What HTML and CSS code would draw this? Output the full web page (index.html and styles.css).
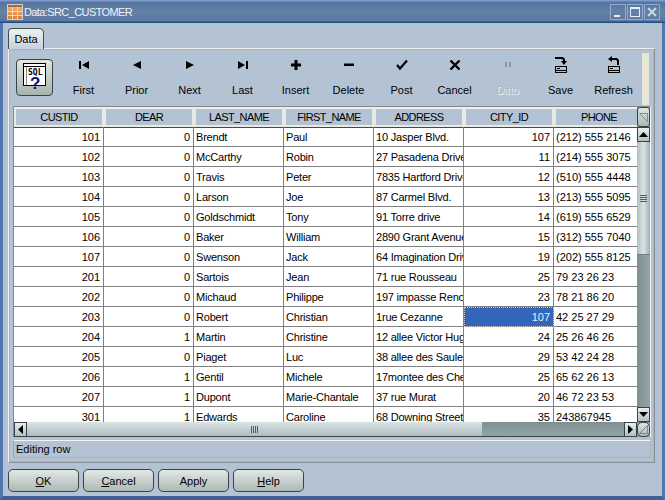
FILE: index.html
```html
<!DOCTYPE html>
<html lang="en">

<head>
    <meta charset="UTF-8">
    <title>Data:SRC_CUSTOMER</title>
    <link rel="stylesheet" href="styles.css">
</head>

<body>
    <div class="window">
        <div class="titlebar">
            <svg class="title-icon" width="16" height="16" viewBox="0 0 16 16">
                <defs>
                    <linearGradient id="tileFill" x1="0" y1="0" x2="0" y2="1">
                        <stop offset="0" stop-color="#f4b878"/>
                        <stop offset="1" stop-color="#e07a2c"/>
                    </linearGradient>
                </defs>
                <rect x="0.5" y="0.5" width="15" height="15" fill="url(#tileFill)" stroke="#c9d2dc"/>
                <rect x="1" y="1" width="14" height="2" fill="#a8683c"/>
                <path d="M1 7.5h14M1 11.5h14M5.500 3v12M10.500 3v12" stroke="#f8d8b0" fill="none"/>
            </svg>
            <span class="title-text">Data:SRC_CUSTOMER</span>
            <div class="win-btns">
                <div class="win-btn"><svg width="16" height="16" viewBox="0 0 16 16"><rect x="4" y="11" width="6" height="2" fill="#e8eef6"/></svg></div>
                <div class="win-btn"><svg width="16" height="16" viewBox="0 0 16 16"><rect x="3.5" y="3.5" width="9" height="9" fill="none" stroke="#e8eef6"/><rect x="3" y="3" width="10" height="2" fill="#e8eef6"/></svg></div>
                <div class="win-btn"><svg width="16" height="16" viewBox="0 0 16 16"><path d="M4 4l8 8M12 4l-8 8" stroke="#c9d6e8" stroke-width="2" fill="none"/></svg></div>
            </div>
        </div>

        <div class="client">
            <div class="tab">Data</div>
            <div class="tab-panel">
                <div class="toolbar">
                    <div class="sql-btn">
                        <svg width="23" height="30" viewBox="0 0 23 30">
                            <rect x="0.5" y="0.5" width="22" height="22" fill="#fff" stroke="#000"/>
                            <path d="M1 3.5h21" stroke="#000"/>
                            <path d="M3.500 4v18" stroke="#888"/>
                            <text x="5" y="11.500" class="sql-text">SQL</text>
                            <text x="7" y="26" class="sql-q">?</text>
                        </svg>
                    </div>
                    <div class="tools">
                        <div class="tool">
                            <svg width="16" height="20" viewBox="0 0 16 20"><path d="M3 6h2v8H3zM13 6v8L6 10z"/></svg>
                            <span>First</span>
                        </div>
                        <div class="tool">
                            <svg width="16" height="20" viewBox="0 0 16 20"><path d="M12 6v8L4 10z"/></svg>
                            <span>Prior</span>
                        </div>
                        <div class="tool">
                            <svg width="16" height="20" viewBox="0 0 16 20"><path d="M4 6v8l8-4z"/></svg>
                            <span>Next</span>
                        </div>
                        <div class="tool">
                            <svg width="16" height="20" viewBox="0 0 16 20"><path d="M3 6v8l7-4zM11 6h2v8h-2z"/></svg>
                            <span>Last</span>
                        </div>
                        <div class="tool">
                            <svg width="16" height="20" viewBox="0 0 16 20"><path d="M6.500 5h3v3.500H13v3H9.500V15h-3v-3.500H3v-3h3.500z"/></svg>
                            <span>Insert</span>
                        </div>
                        <div class="tool">
                            <svg width="16" height="20" viewBox="0 0 16 20"><path d="M3 8.500h10V11H3z"/></svg>
                            <span>Delete</span>
                        </div>
                        <div class="tool">
                            <svg width="16" height="20" viewBox="0 0 16 20"><path d="M3 10l3 3.500L13 5.500" fill="none" stroke="#000" stroke-width="2.200"/></svg>
                            <span>Post</span>
                        </div>
                        <div class="tool">
                            <svg width="16" height="20" viewBox="0 0 16 20"><path d="M3.500 5.500l9 9M12.500 5.500l-9 9" fill="none" stroke="#000" stroke-width="2.400"/></svg>
                            <span>Cancel</span>
                        </div>
                        <div class="tool tool-off">
                            <svg width="16" height="20" viewBox="0 0 16 20"><path d="M5 7h2v5H5zM9 7h2v5H9z" fill="#8d99a8"/></svg>
                            <span>Ditto</span>
                        </div>
                        <div class="tool">
                            <svg width="16" height="20" viewBox="0 0 16 20"><path d="M2 2h8l2 2v2h2l-3 4-3-4h2V5L9 4H2z"/><rect x="2.500" y="11.500" width="11" height="6" fill="none" stroke="#000"/><path d="M2 15h12v1H2zM4 13h3v1H4z"/></svg>
                            <span>Save</span>
                        </div>
                        <div class="tool">
                            <svg width="16" height="20" viewBox="0 0 16 20"><path d="M6 1v2h5l2 2v5h-2V6l-1-1H6v2L2 4z"/><rect x="2.500" y="11.500" width="11" height="6" fill="none" stroke="#000"/><path d="M2 15h12v1H2zM4 13h3v1H4z"/></svg>
                            <span>Refresh</span>
                        </div>
                    </div>
                    <div class="toolbar-scroll"></div>
                </div>

                <div class="grid-wrap">
                    <div class="grid-top">
                        <div class="grid-view">
                            <table class="grid">
                                <thead>
                                    <tr>
                                        <th>CUSTID</th><th>DEAR</th><th>LAST_NAME</th><th>FIRST_NAME</th><th>ADDRESS</th><th>CITY_ID</th><th>PHONE</th>
                                    </tr>
                                </thead>
                                <tbody>
                                    <tr><td class="num">101</td><td class="num">0</td><td>Brendt</td><td>Paul</td><td>10 Jasper Blvd.</td><td class="num">107</td><td>(212) 555 2146</td></tr>
                                    <tr><td class="num">102</td><td class="num">0</td><td>McCarthy</td><td>Robin</td><td>27 Pasadena Drive</td><td class="num">11</td><td>(214) 555 3075</td></tr>
                                    <tr><td class="num">103</td><td class="num">0</td><td>Travis</td><td>Peter</td><td>7835 Hartford Drive</td><td class="num">12</td><td>(510) 555 4448</td></tr>
                                    <tr><td class="num">104</td><td class="num">0</td><td>Larson</td><td>Joe</td><td>87 Carmel Blvd.</td><td class="num">13</td><td>(213) 555 5095</td></tr>
                                    <tr><td class="num">105</td><td class="num">0</td><td>Goldschmidt</td><td>Tony</td><td>91 Torre drive</td><td class="num">14</td><td>(619) 555 6529</td></tr>
                                    <tr><td class="num">106</td><td class="num">0</td><td>Baker</td><td>William</td><td>2890 Grant Avenue</td><td class="num">15</td><td>(312) 555 7040</td></tr>
                                    <tr><td class="num">107</td><td class="num">0</td><td>Swenson</td><td>Jack</td><td>64 Imagination Drive</td><td class="num">19</td><td>(202) 555 8125</td></tr>
                                    <tr><td class="num">201</td><td class="num">0</td><td>Sartois</td><td>Jean</td><td>71 rue Rousseau</td><td class="num">25</td><td>79 23 26 23</td></tr>
                                    <tr><td class="num">202</td><td class="num">0</td><td>Michaud</td><td>Philippe</td><td>197 impasse Renoir</td><td class="num">23</td><td>78 21 86 20</td></tr>
                                    <tr><td class="num">203</td><td class="num">0</td><td>Robert</td><td>Christian</td><td>1rue Cezanne</td><td class="num cell-active">107</td><td>42 25 27 29</td></tr>
                                    <tr><td class="num">204</td><td class="num">1</td><td>Martin</td><td>Christine</td><td>12 allee Victor Hugo</td><td class="num">24</td><td>25 26 46 26</td></tr>
                                    <tr><td class="num">205</td><td class="num">0</td><td>Piaget</td><td>Luc</td><td>38 allee des Saules</td><td class="num">29</td><td>53 42 24 28</td></tr>
                                    <tr><td class="num">206</td><td class="num">1</td><td>Gentil</td><td>Michele</td><td>17montee des Chenes</td><td class="num">25</td><td>65 62 26 13</td></tr>
                                    <tr><td class="num">207</td><td class="num">1</td><td>Dupont</td><td>Marie-Chantale</td><td>37 rue Murat</td><td class="num">20</td><td>46 72 23 53</td></tr>
                                    <tr><td class="num">301</td><td class="num">1</td><td>Edwards</td><td>Caroline</td><td>68 Downing Street</td><td class="num">35</td><td>243867945</td></tr>
                                </tbody>
                            </table>
                        </div>
                        <div class="vscroll">
                            <div class="corner-btn"><svg width="9" height="9" viewBox="0 0 9 9"><path d="M0.500 0.500h8v8z" fill="none" stroke="#7a8a8a"/></svg></div>
                            <div class="sb-btn"><svg width="9" height="5" viewBox="0 0 9 5"><path d="M4.500 0L9 5H0z"/></svg></div>
                            <div class="vthumb"><div class="grip-h"></div></div>
                            <div class="sb-track-v"></div>
                            <div class="sb-btn"><svg width="9" height="5" viewBox="0 0 9 5"><path d="M0 0h9L4.500 5z"/></svg></div>
                        </div>
                    </div>
                    <div class="hscroll">
                        <div class="sb-btn sb-btn-h"><svg width="5" height="9" viewBox="0 0 5 9"><path d="M5 0v9L0 4.500z"/></svg></div>
                        <div class="hthumb"><div class="grip-v"></div></div>
                        <div class="sb-track-h"></div>
                        <div class="sb-btn sb-btn-h"><svg width="5" height="9" viewBox="0 0 5 9"><path d="M0 0v9l5-4.500z"/></svg></div>
                        <div class="corner-btn corner-end"><svg width="9" height="9" viewBox="0 0 9 9"><path d="M8.500 0.500v8h-8z" fill="none" stroke="#7a8a8a"/></svg></div>
                    </div>
                </div>
                <div class="status">Editing row</div>
            </div>

            <div class="buttons">
                <div class="btn"><u>O</u>K</div>
                <div class="btn"><u>C</u>ancel</div>
                <div class="btn">Apply</div>
                <div class="btn"><u>H</u>elp</div>
            </div>
        </div>
    </div>
</body>

</html>
```

FILE: styles.css
```css
* {
    margin: 0;
    padding: 0;
    box-sizing: border-box;
}

html,
body {
    width: 665px;
    height: 500px;
    overflow: hidden;
}

body {
    font-family: "Liberation Sans", Arial, sans-serif;
    font-size: 11px;
    color: #000;
}

.window {
    width: 665px;
    height: 500px;
    display: flex;
    flex-direction: column;
    background: #b4c3d4;
    border-left: 3px solid #4f77ad;
    border-right: 3px solid #4f77ad;
    border-bottom: 4px solid #41618f;
}

/* title */

.titlebar {
    height: 23px;
    margin: 0 -3px;
    padding: 1px 5px 0 7px;
    display: flex;
    align-items: center;
    flex: none;
    background: linear-gradient(#7c9ad0 0, #7c9ad0 1px, #56759c 2px, #6581a6 12px, #5c789e 21px, #1f4f80 22px);
    color: #fff;
}

.title-icon {
    flex: none;
    margin-right: 1px;
}

.title-text {
    font-size: 11px;
    letter-spacing: -0.6px;
    color: #eef2f8;
}

.win-btns {
    margin-left: auto;
    display: flex;
    gap: 1px;
}

.win-btn {
    width: 16px;
    height: 16px;
    border: 1px solid #8fa9d0;
    display: flex;
}

.win-btn svg {
    margin: -1px;
    flex: none;
}

.client {
    flex: 1;
    display: flex;
    flex-direction: column;
    padding: 5px 5px 0 5px;
    min-height: 0;
}

/* tab */

.tab {
    width: 36px;
    height: 21px;
    line-height: 20px;
    text-align: center;
    font-size: 11px;
    position: relative;
    z-index: 1;
    margin-bottom: -1px;
    border: 1px solid #3f4d55;
    border-bottom: none;
    border-radius: 4px 5px 0 0;
    background: linear-gradient(#f0f3ee, #c4d0dc);
}

.tab-panel {
    height: 415px;
    flex: none;
    display: flex;
    flex-direction: column;
    border-top: 1px solid #f2f2f2;
    border-left: 1px solid #f2f2f2;
    border-right: 1px solid #8a8f94;
    border-bottom: 1px solid #8a8f94;
    outline: 1px solid #a8b4bf;
    outline-offset: -2px;
    padding: 3px 3px 4px 4px;
    margin-right: 2px;
}

/* toolbar */

.toolbar {
    height: 54px;
    flex: none;
    display: flex;
    align-items: flex-start;
}

.sql-btn {
    width: 37px;
    height: 37px;
    margin: 7px 1px 0 3px;
    flex: none;
    display: flex;
    justify-content: center;
    align-items: flex-start;
    padding-top: 3px;
    border: 1px solid #36434b;
    border-radius: 4px;
    background: linear-gradient(#e4e8e0, #a7b3ad);
}

.sql-text {
    font-family: "DejaVu Sans Mono", monospace;
    font-size: 8px;
    font-weight: bold;
}

.sql-q {
    font-family: "Liberation Sans", sans-serif;
    font-size: 17px;
    font-weight: bold;
    fill: #14146e;
}

.tools {
    display: flex;
    flex: 1;
    margin-left: 3px;
}

.tool {
    width: 53px;
    height: 52px;
    flex: none;
    display: flex;
    flex-direction: column;
    align-items: center;
    padding-top: 3px;
    font-size: 11px;
}

.tool svg {
    flex: none;
    margin-bottom: 9px;
}

.tool-off span {
    color: #a9b6c4;
    text-shadow: 1px 1px 0 #eef1f4;
}

.toolbar-scroll {
    width: 7px;
    height: 52px;
    margin: 1px 2px 0 auto;
    flex: none;
    background: #e8e6d8;
}

/* grid */

.grid-wrap {
    flex: 1;
    min-height: 0;
    display: flex;
    flex-direction: column;
    border-top: 1px solid #7f8a90;
    border-left: 1px solid #7f8a90;
    border-right: 1px solid #f2f2f2;
    background: #fff;
}

.grid-top {
    flex: 1;
    min-height: 0;
    display: flex;
}

.grid-view {
    flex: 1;
    min-width: 0;
    overflow: hidden;
}

.grid {
    border-collapse: separate;
    border-spacing: 0;
    table-layout: fixed;
    width: 630px;
}

.grid th {
    width: 90px;
    height: 20px;
    font-weight: normal;
    font-size: 11px;
    letter-spacing: -0.6px;
    background: #b4c3d4;
    border: 2px solid #e9ebe2;
    border-right-color: #e9ebe2;
    border-top-color: #f0f0e8;
    box-shadow: 1px 0 0 #707a80, 0 1px 0 #404a50;
    white-space: nowrap;
    overflow: hidden;
}

.grid td {
    height: 20px;
    padding: 1px 2px 0 2px;
    font-size: 11px;
    white-space: nowrap;
    overflow: hidden;
    border-right: 1px solid #808080;
    border-bottom: 1px solid #808080;
}

/* name and address columns run a bit tighter */
.grid td:nth-child(n+3):nth-child(-n+5) {
    letter-spacing: -0.2px;
}

.grid td.num {
    text-align: right;
    padding-right: 3px;
}

.grid td.cell-active {
    background: #3366bb;
    color: #e8eef8;
    outline: 1px dotted #c8c8c8;
    outline-offset: -1px;
}

/* scrollbars */

.vscroll {
    width: 13px;
    flex: none;
    display: flex;
    flex-direction: column;
    background: #87989a;
}

.corner-btn {
    width: 13px;
    height: 20px;
    flex: none;
    display: flex;
    justify-content: center;
    align-items: center;
    border: 1px solid #36434b;
    border-radius: 3px;
    background: linear-gradient(#dfe6e2, #a9b8b6);
}

.sb-btn {
    width: 13px;
    height: 15px;
    flex: none;
    display: flex;
    justify-content: center;
    align-items: center;
    border: 1px solid #36434b;
    background: linear-gradient(#e8eeec, #b2c0c4);
}

.sb-btn-h {
    height: 15px;
    width: 13px;
}

.vthumb {
    height: 113px;
    flex: none;
    display: flex;
    justify-content: center;
    align-items: center;
    background: linear-gradient(90deg, #aebcc0, #dbe4e4 50%, #9fb0b2);
    border-bottom: 1px solid #707f80;
}

.grip-h {
    width: 7px;
    height: 7px;
    background: repeating-linear-gradient(#4f5f60 0, #4f5f60 1px, transparent 1px, transparent 2px);
}

.sb-track-v {
    flex: 1;
    background: linear-gradient(90deg, #7f9092, #94a4a6);
}

.hscroll {
    height: 15px;
    flex: none;
    display: flex;
    background: #87989a;
}

.hthumb {
    width: 455px;
    flex: none;
    display: flex;
    justify-content: center;
    align-items: center;
    background: linear-gradient(#dbe4e4, #aebcc0);
    border-bottom: 1px solid #36434b;
}

.grip-v {
    width: 7px;
    height: 7px;
    background: repeating-linear-gradient(90deg, #4f5f60 0, #4f5f60 1px, transparent 1px, transparent 2px);
}

.sb-track-h {
    flex: 1;
    background: linear-gradient(#7f9092, #94a4a6);
    border-bottom: 1px solid #36434b;
}

.corner-end {
    height: 15px;
    border-radius: 5px;
}

.status {
    height: 18px;
    flex: none;
    margin-top: 3px;
    padding-left: 2px;
    line-height: 16px;
    font-size: 11px;
    border-top: 1px solid #f2f2f2;
    border-left: 1px solid #9aa6b0;
    border-right: 1px solid #a8b4bf;
    border-bottom: 1px solid #a8b4bf;
}

/* bottom buttons */

.buttons {
    display: flex;
    gap: 4px;
    margin-top: 6px;
}

.btn {
    width: 71px;
    height: 23px;
    line-height: 22px;
    text-align: center;
    font-size: 11px;
    border: 1px solid #36434b;
    border-radius: 5px;
    background: linear-gradient(#e3e8e4, #acb9b6);
}
```
